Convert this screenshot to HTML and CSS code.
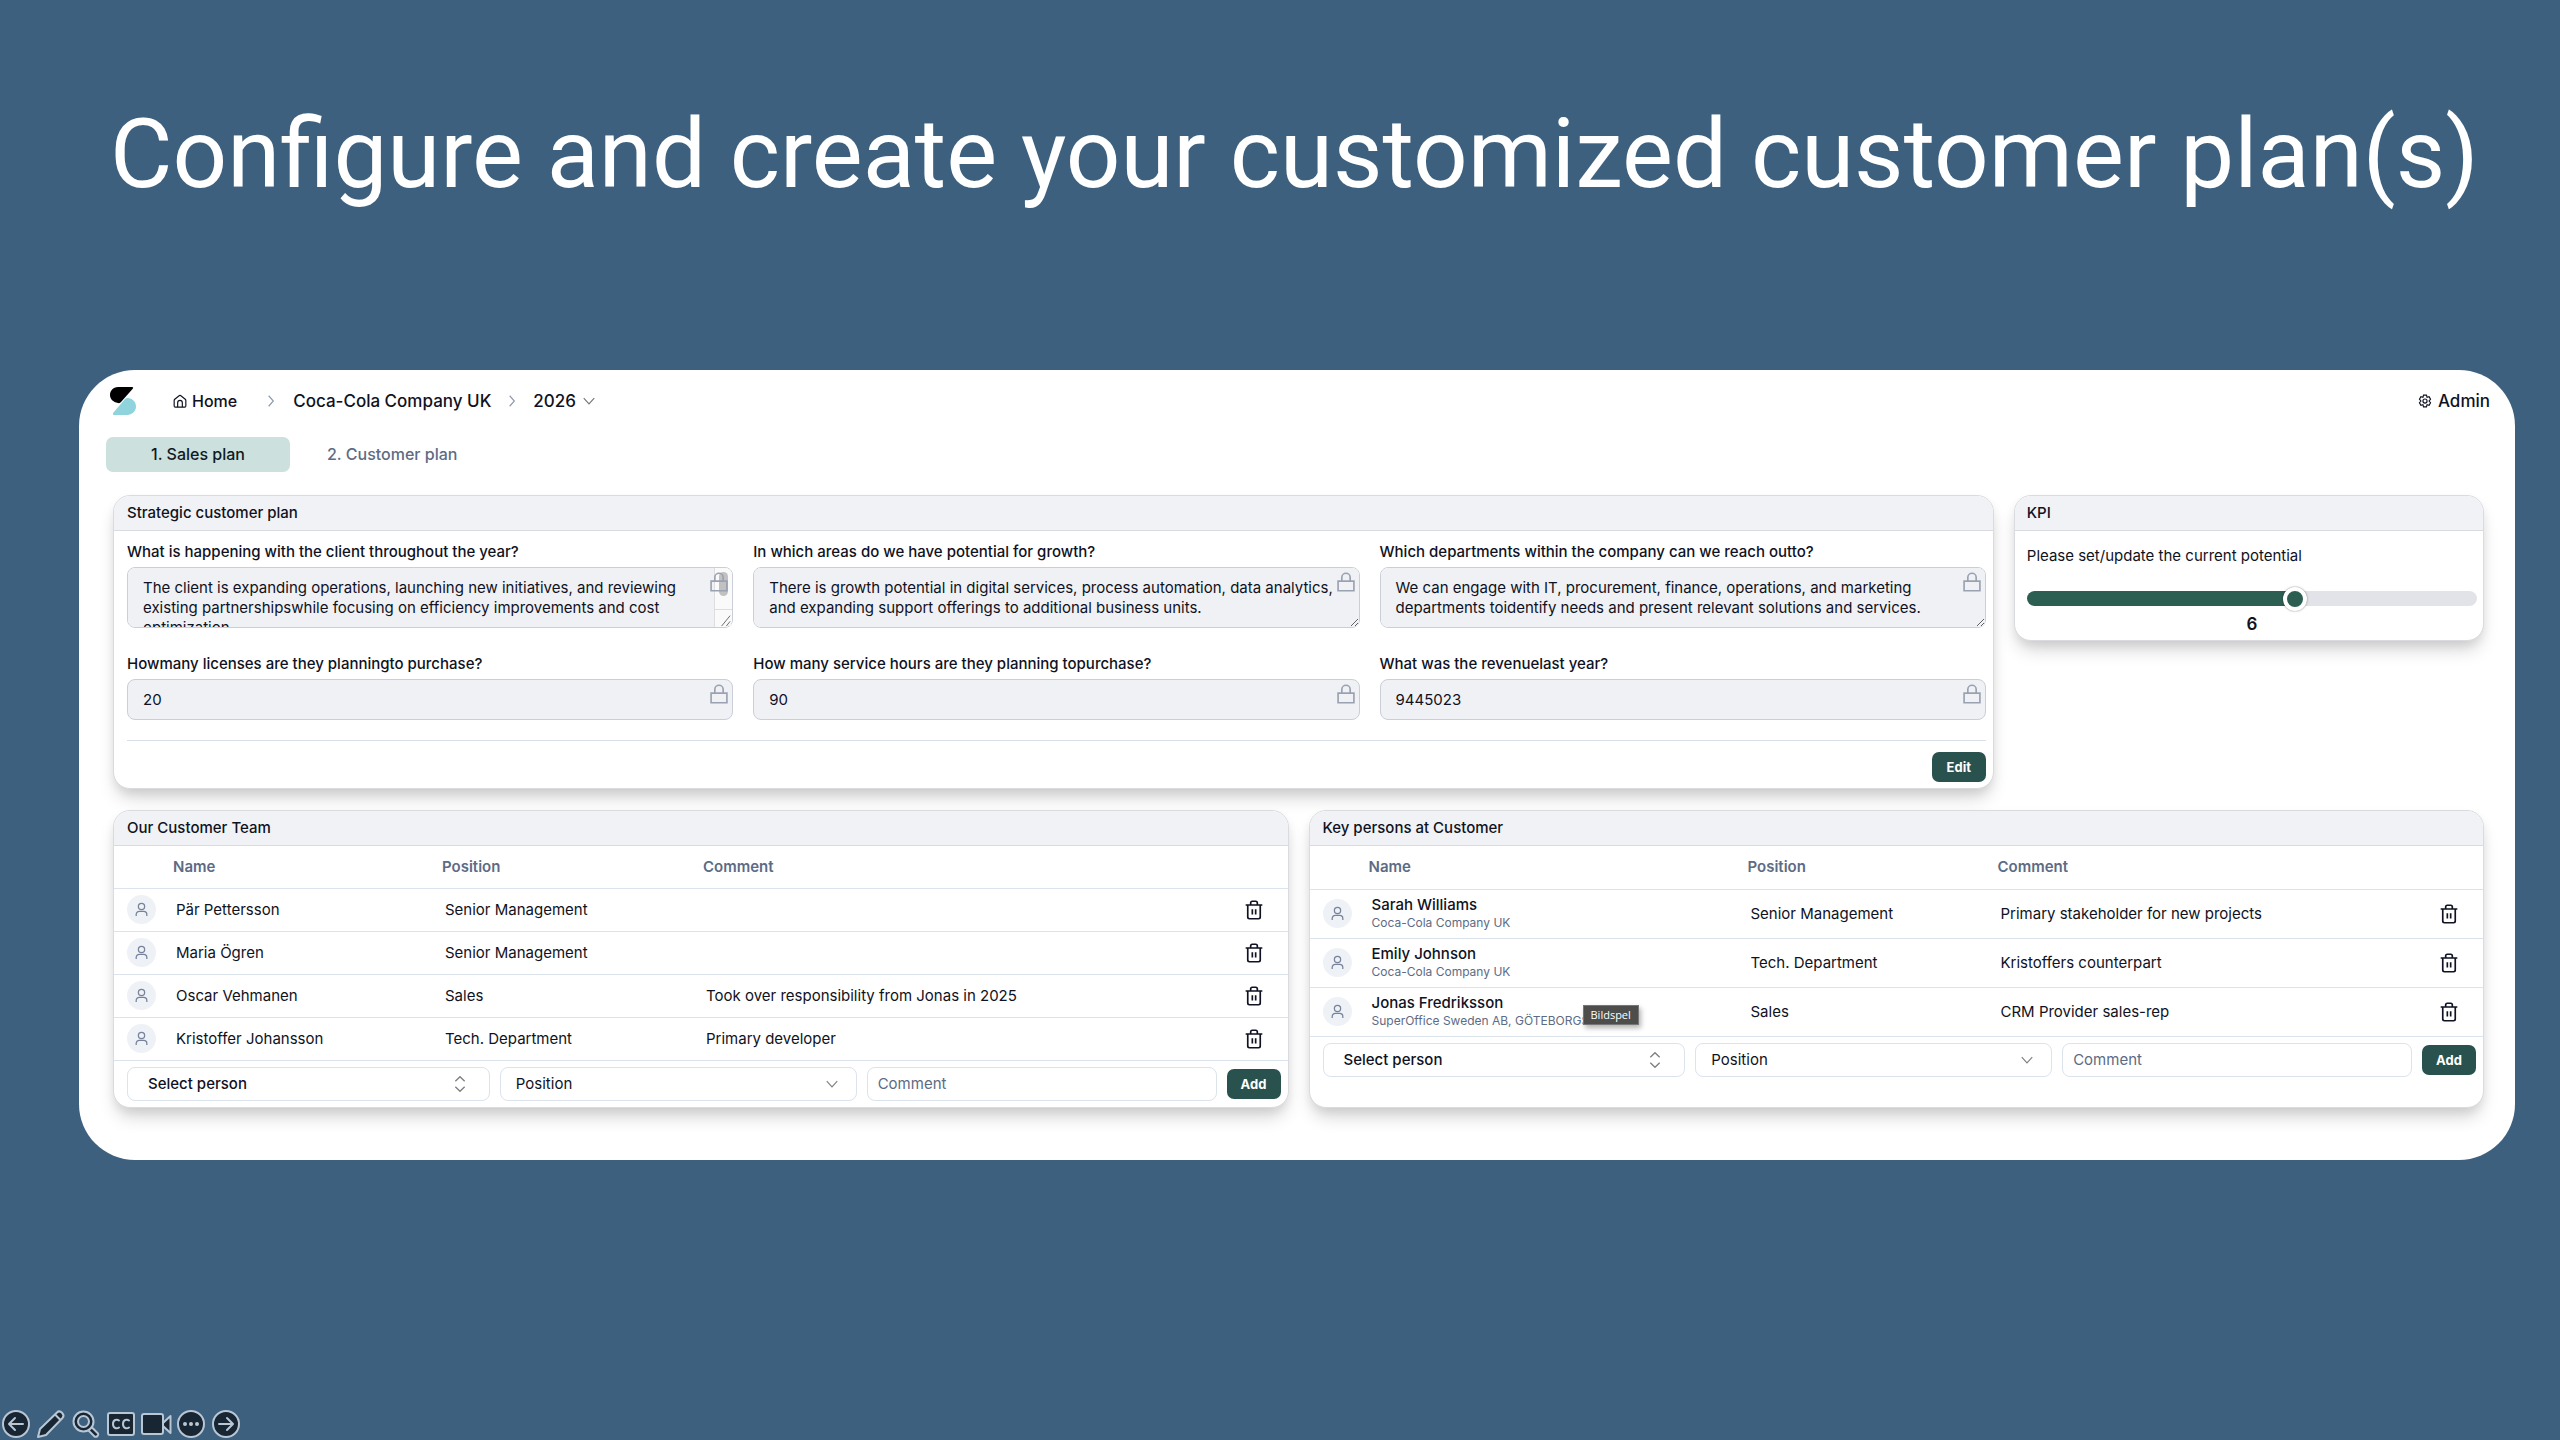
FILE: index.html
```html
<!doctype html>
<html lang="en">
<head>
    <meta charset="utf-8">
    <title>Customer plan</title>
    <meta name="viewport" content="width=device-width, initial-scale=1">
    <link rel="stylesheet" href="styles.css">
</head>
<body>
<svg class="sprite" aria-hidden="true">
    <symbol id="i-lock" viewBox="0 0 24 24">
        <path d="M2.5 11h19v11.5h-19zM7 11V6.5a5 5 0 0 1 10 0V11"></path>
    </symbol>
    <symbol id="i-user" viewBox="0 0 24 24">
        <circle cx="12" cy="7" r="5"></circle>
        <path d="M3.500 22.500v-2.500a5 5 0 0 1 5-5h7a5 5 0 0 1 5 5v2.500"></path>
    </symbol>
    <symbol id="i-trash" viewBox="0 0 24 24">
        <path d="M2 6h20M19.500 6v14.500a2 2 0 0 1-2 2h-11a2 2 0 0 1-2-2V6M8 6V3.500a2 2 0 0 1 2-2h4a2 2 0 0 1 2 2V6M10 11v6.500M14 11v6.500"></path>
    </symbol>
    <symbol id="i-right" viewBox="0 0 24 24"><path d="M8 3l8 9-8 9"></path></symbol>
    <symbol id="i-down" viewBox="0 0 24 24"><path d="M3 7l9 10 9-10"></path></symbol>
    <symbol id="i-updown" viewBox="0 0 24 24"><path d="M5 8l7-7 7 7M5 16l7 7 7-7"></path></symbol>
</svg>

<h1 class="title">Configure and create your customized customer plan(s)</h1>

<main class="panel">
    <header class="topbar">
        <svg class="logo" viewBox="0 0 26 28" aria-label="Logo">
            <path d="M8 0h14q2 0 .500 2L11 15q-1 1.500-3 1C3 15 0 12 0 8S3 0 8 0z" fill="#000"></path>
            <path d="M4 28q-2-.500-.500-2.500L15 12q1.500-1.500 3.500-1C23 12 26 15 26 19.500S22 28 17 28z" fill="#8fd3dc"></path>
        </svg>
        <nav class="crumbs">
            <a href="#" class="home">
                <svg class="icon" viewBox="0 0 24 24"><path d="M2 11q0-1 1-2l8-6.500q1-.500 2 0L21 9q1 1 1 2v9.500q0 2-2 2H4q-2 0-2-2zM8 22v-7a4 4 0 0 1 8 0v7"></path></svg>
                Home
            </a>
            <svg class="icon sep"><use href="#i-right"></use></svg>
            <a href="#">Coca-Cola Company UK</a>
            <svg class="icon sep sep-tight"><use href="#i-right"></use></svg>
            <button type="button" class="year">2026 <svg class="icon"><use href="#i-down"></use></svg></button>
        </nav>
        <a href="#" class="admin">
            <svg class="icon" viewBox="0 0 24 24">
                <path d="M9.500 2h5l1 3.500 3.500-1 2.500 4.500-2.500 3 2.500 3-2.500 4.500-3.500-1-1 3.500h-5l-1-3.500-3.500 1L2.500 15 5 12 2.500 9 5 4.500l3.500 1z"></path>
                <circle cx="12" cy="12" r="3.500"></circle>
            </svg>
            Admin
        </a>
    </header>

    <nav class="tabs">
        <a href="#" class="tab active">1. Sales plan</a>
        <a href="#" class="tab">2. Customer plan</a>
    </nav>

    <div class="row row-plan">
        <section class="card">
            <h2>Strategic customer plan</h2>
            <form class="plan">
                <div class="fields">
                    <div class="field">
                        <label for="q1">What is happening with the client throughout the year?</label>
                        <div class="control">
                            <textarea id="q1" readonly>The client is expanding operations, launching new initiatives, and reviewing existing partnershipswhile focusing on efficiency improvements and cost optimization.</textarea>
                            <span class="scrollbar">
                                <span class="thumb"></span>
                                <svg class="grip" viewBox="0 0 18 18"><path d="M7 17l9-11M12 17l4-5"></path></svg>
                            </span>
                            <svg class="lock"><use href="#i-lock"></use></svg>
                        </div>
                    </div>
                    <div class="field">
                        <label for="q2">In which areas do we have potential for growth?</label>
                        <div class="control">
                            <textarea id="q2" readonly>There is growth potential in digital services, process automation, data analytics, and expanding support offerings to additional business units.</textarea>
                            <svg class="lock"><use href="#i-lock"></use></svg>
                        </div>
                    </div>
                    <div class="field">
                        <label for="q3">Which departments within the company can we reach outto?</label>
                        <div class="control">
                            <textarea id="q3" readonly>We can engage with IT, procurement, finance, operations, and marketing departments toidentify needs and present relevant solutions and services.</textarea>
                            <svg class="lock"><use href="#i-lock"></use></svg>
                        </div>
                    </div>
                    <div class="field">
                        <label for="q4">Howmany licenses are they planningto purchase?</label>
                        <div class="control">
                            <input id="q4" type="text" value="20" readonly>
                            <svg class="lock"><use href="#i-lock"></use></svg>
                        </div>
                    </div>
                    <div class="field">
                        <label for="q5">How many service hours are they planning topurchase?</label>
                        <div class="control">
                            <input id="q5" type="text" value="90" readonly>
                            <svg class="lock"><use href="#i-lock"></use></svg>
                        </div>
                    </div>
                    <div class="field">
                        <label for="q6">What was the revenuelast year?</label>
                        <div class="control">
                            <input id="q6" type="text" value="9445023" readonly>
                            <svg class="lock"><use href="#i-lock"></use></svg>
                        </div>
                    </div>
                </div>
                <div class="actions">
                    <button type="button" class="btn">Edit</button>
                </div>
            </form>
        </section>

        <section class="card kpi">
            <h2>KPI</h2>
            <div class="kpi-body">
                <label for="potential">Please set/update the current potential</label>
                <input id="potential" type="range" min="0" max="10" value="6">
                <output for="potential">6</output>
            </div>
        </section>
    </div>

    <div class="row row-people">
        <section class="card">
            <h2>Our Customer Team</h2>
            <table class="people team">
                <thead>
                <tr>
                    <th class="c-avatar"></th>
                    <th class="c-name">Name</th>
                    <th class="c-position">Position</th>
                    <th>Comment</th>
                    <th class="c-trash"></th>
                </tr>
                </thead>
                <tbody>
                <tr>
                    <td><span class="avatar"><svg><use href="#i-user"></use></svg></span></td>
                    <td>Pär Pettersson</td>
                    <td>Senior Management</td>
                    <td></td>
                    <td><button type="button" class="trash" aria-label="Remove"><svg><use href="#i-trash"></use></svg></button></td>
                </tr>
                <tr>
                    <td><span class="avatar"><svg><use href="#i-user"></use></svg></span></td>
                    <td>Maria Ögren</td>
                    <td>Senior Management</td>
                    <td></td>
                    <td><button type="button" class="trash" aria-label="Remove"><svg><use href="#i-trash"></use></svg></button></td>
                </tr>
                <tr>
                    <td><span class="avatar"><svg><use href="#i-user"></use></svg></span></td>
                    <td>Oscar Vehmanen</td>
                    <td>Sales</td>
                    <td>Took over responsibility from Jonas in 2025</td>
                    <td><button type="button" class="trash" aria-label="Remove"><svg><use href="#i-trash"></use></svg></button></td>
                </tr>
                <tr>
                    <td><span class="avatar"><svg><use href="#i-user"></use></svg></span></td>
                    <td>Kristoffer Johansson</td>
                    <td>Tech. Department</td>
                    <td>Primary developer</td>
                    <td><button type="button" class="trash" aria-label="Remove"><svg><use href="#i-trash"></use></svg></button></td>
                </tr>
                </tbody>
            </table>
            <form class="add">
                <div class="pick pick-person">
                    <select aria-label="Person"><option>Select person</option></select>
                    <svg class="icon"><use href="#i-updown"></use></svg>
                </div>
                <div class="pick">
                    <select aria-label="Position"><option>Position</option></select>
                    <svg class="icon"><use href="#i-down"></use></svg>
                </div>
                <input type="text" placeholder="Comment" aria-label="Comment">
                <button type="button" class="btn">Add</button>
            </form>
        </section>

        <section class="card">
            <h2>Key persons at Customer</h2>
            <table class="people keys">
                <thead>
                <tr>
                    <th class="c-avatar"></th>
                    <th class="c-name">Name</th>
                    <th class="c-position">Position</th>
                    <th>Comment</th>
                    <th class="c-trash"></th>
                </tr>
                </thead>
                <tbody>
                <tr>
                    <td><span class="avatar"><svg><use href="#i-user"></use></svg></span></td>
                    <td><strong>Sarah Williams</strong><small>Coca-Cola Company UK</small></td>
                    <td>Senior Management</td>
                    <td>Primary stakeholder for new projects</td>
                    <td><button type="button" class="trash" aria-label="Remove"><svg><use href="#i-trash"></use></svg></button></td>
                </tr>
                <tr>
                    <td><span class="avatar"><svg><use href="#i-user"></use></svg></span></td>
                    <td><strong>Emily Johnson</strong><small>Coca-Cola Company UK</small></td>
                    <td>Tech. Department</td>
                    <td>Kristoffers counterpart</td>
                    <td><button type="button" class="trash" aria-label="Remove"><svg><use href="#i-trash"></use></svg></button></td>
                </tr>
                <tr>
                    <td><span class="avatar"><svg><use href="#i-user"></use></svg></span></td>
                    <td><strong>Jonas Fredriksson</strong><small class="tip-anchor">SuperOffice Sweden AB, GÖTEBORGS<span class="tip" role="tooltip">Bildspel</span></small></td>
                    <td>Sales</td>
                    <td>CRM Provider sales-rep</td>
                    <td><button type="button" class="trash" aria-label="Remove"><svg><use href="#i-trash"></use></svg></button></td>
                </tr>
                </tbody>
            </table>
            <form class="add">
                <div class="pick pick-person">
                    <select aria-label="Person"><option>Select person</option></select>
                    <svg class="icon"><use href="#i-updown"></use></svg>
                </div>
                <div class="pick">
                    <select aria-label="Position"><option>Position</option></select>
                    <svg class="icon"><use href="#i-down"></use></svg>
                </div>
                <input type="text" placeholder="Comment" aria-label="Comment">
                <button type="button" class="btn">Add</button>
            </form>
        </section>
    </div>
</main>

<!-- slide show controls -->
<footer class="controls">
    <button type="button" aria-label="Previous">
        <svg viewBox="0 0 28 28"><circle cx="14" cy="14" r="13"></circle><path d="M21 14H8M13 8l-6 6 6 6"></path></svg>
    </button>
    <button type="button" aria-label="Pen">
        <svg viewBox="0 0 28 28"><path d="M1 27l2-8L20 2.500c3-3 8.500 2 5.500 5.500L9 25zM18 4.500l5.500 5.500"></path></svg>
    </button>
    <button type="button" aria-label="Zoom">
        <svg viewBox="0 0 28 28">
            <path d="M18 15.500l8 8c1 2-1.500 4-3.500 3l-8-8"></path>
            <circle cx="11.500" cy="11.500" r="10"></circle>
            <circle class="glass" cx="11.500" cy="11.500" r="5.500"></circle>
        </svg>
    </button>
    <button type="button" aria-label="Captions">
        <svg viewBox="0 0 28 28"><rect x="1" y="3" width="26" height="22" rx="2"></rect><path d="M12 10.500c-2-1.500-6-1-6 3.500s4 5 6 3.500M22 10.500c-2-1.500-6-1-6 3.500s4 5 6 3.500"></path></svg>
    </button>
    <button type="button" aria-label="Camera">
        <svg viewBox="0 0 28 28"><path d="M21 13l7.500-7v17L21 16"></path><rect x="0" y="4" width="21" height="20" rx="2"></rect></svg>
    </button>
    <button type="button" aria-label="More">
        <svg viewBox="0 0 28 28"><circle cx="14" cy="14" r="13"></circle><path class="dots" d="M8 14h.010M14 14h.010M20 14h.010"></path></svg>
    </button>
    <button type="button" aria-label="Next">
        <svg viewBox="0 0 28 28"><circle cx="14" cy="14" r="13"></circle><path d="M7 14h13M15 8l6 6-6 6"></path></svg>
    </button>
</footer>
</body>
</html>
```
FILE: styles.css
```css
* {
    box-sizing: border-box;
}

body {
    margin: 0;
    min-height: 100vh;
    display: flex;
    flex-direction: column;
    background: #3d607f;
    color: #0f1222;
    font-family: Inter, "Liberation Sans", sans-serif;
    font-size: 15px;
    line-height: 20px;
}

input, textarea, select, button {
    font: inherit;
    color: inherit;
}

button {
    padding: 0;
    border: 0;
    background: none;
    cursor: pointer;
}

a {
    color: inherit;
    text-decoration: none;
}

svg {
    display: block;
    fill: none;
    stroke: currentColor;
    stroke-width: 2;
}

.sprite {
    position: absolute;
    width: 0;
    height: 0;
}

.icon {
    width: 14px;
    height: 14px;
    flex: none;
}

.title {
    margin: 0;
    padding: 98px 0 160px 110px;
    color: #fff;
    font-family: Roboto, "Liberation Sans", sans-serif;
    font-size: 96px;
    font-weight: 400;
    line-height: 112px;
}

.panel {
    margin: 0 45px 0 79px;
    padding: 17px 31px 52px 34px;
    background: #fff;
    border-radius: 56px;
}

/* top bar */
.topbar {
    display: flex;
    align-items: center;
    height: 28px;
    margin: 0 -6px 22px -3px;
    font-size: 17px;
    font-weight: 500;
}

.logo {
    width: 26px;
    height: 28px;
    stroke: none;
}

.crumbs {
    display: flex;
    align-items: center;
    margin-left: 37px;
}

.home, .admin, .year {
    display: flex;
    align-items: center;
    gap: 6px;
}

.home {
    font-size: 16px;
    gap: 5px;
}

.sep {
    margin: 0 15px 0 27px;
    color: #8f9bad;
}

.sep-tight {
    margin: 0 14px;
}

.year .icon {
    color: #777;
}

.admin {
    margin-left: auto;
}

.tabs {
    display: flex;
    margin-left: -7px;
    margin-bottom: 23px;
    gap: 10px;
    font-size: 16px;
    font-weight: 500;
}

.tab {
    padding: 0 27px;
    border-radius: 7px;
    color: #5d6b84;
    line-height: 35px;
}

.tab.active {
    width: 184px;
    text-align: center;
    background: #cce0de;
    color: #0f1a22;
}

/* cards */
.row {
    display: grid;
    gap: 20px;
}

.row-plan {
    grid-template-columns: 4fr 1fr;
    align-items: start;
    margin-bottom: 21px;
}

.row-people {
    grid-template-columns: 1fr 1fr;
}

.card {
    min-width: 0;
    border: 1px solid #d9dbde;
    border-radius: 17px;
    background: #fff;
    box-shadow: 0 12px 18px -4px rgba(0, 0, 0, .18), 0 4px 10px rgba(0, 0, 0, .06);
}

.card h2 {
    margin: 0;
    padding: 0 13px;
    border-bottom: 1px solid #d9dbde;
    border-radius: 16px 16px 0 0;
    background: #f1f2f6;
    font-size: 15px;
    font-weight: 500;
    line-height: 34px;
}

.plan {
    padding: 11px 7px 6px 13px;
}

.fields {
    display: grid;
    grid-template-columns: repeat(3, 1fr);
    gap: 26px 20px;
}

.field label {
    display: block;
    margin-bottom: 5px;
    font-weight: 500;
}

.control {
    position: relative;
}

.control input, .control textarea {
    display: block;
    width: 100%;
    border: 1px solid #c9ced8;
    border-radius: 8px;
    background: #f0f1f5;
    outline: none;
}

.control textarea {
    height: 61px;
    padding: 10px 15px;
    resize: vertical;
}

.control input {
    height: 41px;
    padding: 0 15px;
}

.scrollbar {
    position: absolute;
    top: 1px;
    right: 1px;
    bottom: 1px;
    width: 18px;
    display: flex;
    flex-direction: column;
    justify-content: space-between;
    border-left: 1px solid #dcdde0;
    border-radius: 0 7px 7px 0;
    background: #fafafa;
}

.thumb {
    width: 9px;
    height: 24px;
    margin: 4px 0 0 4px;
    border-radius: 5px;
    background: #c1c1c1;
}

.grip {
    width: 17px;
    height: 18px;
    border-top: 1px solid #dcdde0;
    stroke-width: 1;
    color: #666;
}

.lock {
    position: absolute;
    top: 5px;
    right: 4px;
    width: 20px;
    height: 20px;
    color: #9aa2b1;
    pointer-events: none;
}

.actions {
    display: flex;
    justify-content: flex-end;
    margin-top: 20px;
    padding-top: 11px;
    border-top: 1px solid #d9dfe8;
}

.btn {
    min-width: 54px;
    height: 30px;
    padding: 0 14px;
    border-radius: 7px;
    background: #29524e;
    color: #fff;
    font-size: 13px;
    font-weight: 700;
}

.kpi .kpi-body {
    display: flex;
    flex-direction: column;
    padding: 15px 6px 6px 12px;
}

.kpi h2 {
    padding-left: 12px;
}

.kpi input {
    appearance: none;
    width: 100%;
    height: 24px;
    margin: 20px 0 4px;
    background: none;
}

.kpi input::-webkit-slider-runnable-track {
    height: 15px;
    border-radius: 8px;
    background: linear-gradient(to right, #2d5e52 59%, #e2e3e9 59%);
}

.kpi input::-webkit-slider-thumb {
    appearance: none;
    width: 24px;
    height: 24px;
    margin-top: -4px;
    border: 4px solid #fff;
    border-radius: 50%;
    background: #2d5e52;
    box-shadow: 0 0 2px rgba(0, 0, 0, .5);
}

.kpi output {
    text-align: center;
    font-size: 17px;
    font-weight: 600;
}

/* people tables */
.people {
    width: 100%;
    table-layout: fixed;
    border-collapse: collapse;
}

.people th, .people td {
    padding: 0;
    border-bottom: 1px solid #dbe3ec;
    text-align: left;
}

.people th {
    height: 42px;
    color: #5d6b84;
    font-weight: 600;
}

.keys th {
    height: 43px;
}

.people td {
    padding-left: 3px;
}

.people td:first-child {
    padding-left: 13px;
}

.people td:last-child {
    padding: 0;
}

.team td {
    height: 43px;
}

.keys td {
    height: 49px;
}

.c-avatar {
    width: 59px;
}

.c-trash {
    width: 68px;
}

.team .c-name {
    width: 269px;
}

.team .c-position {
    width: 261px;
}

.keys .c-name {
    width: 379px;
}

.keys .c-position {
    width: 250px;
}

.people strong, .people small {
    display: block;
}

.people strong {
    font-weight: 500;
    line-height: 18px;
}

.people small {
    color: #5d6b84;
    font-size: 12px;
    line-height: 18px;
}

.avatar {
    display: flex;
    align-items: center;
    justify-content: center;
    width: 29px;
    height: 29px;
    border-radius: 50%;
    background: #eef1f6;
    color: #76839a;
}

.avatar svg {
    width: 15px;
    height: 15px;
}

.trash {
    display: block;
    margin: 0 auto;
}

.trash svg {
    width: 20px;
    height: 20px;
}

.people .tip-anchor {
    position: relative;
    width: max-content;
}

.tip {
    position: absolute;
    top: -7px;
    left: 211px;
    padding: 0 7px;
    border: 1px solid #767676;
    background: #4d4d4b;
    box-shadow: 2px 3px 5px rgba(0, 0, 0, .3);
    color: #fff;
    font-family: "Open Sans", sans-serif;
    font-size: 11px;
}

.add {
    display: grid;
    grid-template-columns: 363fr 357fr 350fr auto;
    align-items: center;
    gap: 10px;
    padding: 6px 7px 6px 13px;
}

.add input, .add select {
    display: block;
    width: 100%;
    height: 34px;
    border: 1px solid #dbe3ec;
    border-radius: 8px;
    background: #fff;
    outline: none;
}

.add input {
    padding: 0 10px;
}

.add input::placeholder {
    color: #5d6b84;
}

.pick {
    position: relative;
}

.pick select {
    appearance: none;
    padding: 0 15px;
}

.pick-person select {
    padding: 0 20px;
    font-weight: 500;
}

.pick .icon {
    position: absolute;
    top: 10px;
    right: 18px;
    color: #808080;
    pointer-events: none;
}

.pick-person .icon {
    top: 9px;
    right: 22px;
    height: 16px;
    width: 16px;
}

/* slide show controls */
.controls {
    display: flex;
    gap: 7px;
    margin-top: auto;
    padding: 0 2px 2px;
    color: #b9c6d4;
}

.controls svg {
    width: 28px;
    height: 28px;
    overflow: visible;
    fill: #182633;
}

.controls path {
    stroke-linecap: round;
    stroke-linejoin: round;
}

.controls .glass {
    fill: #3d607f;
}

.controls .dots {
    stroke-width: 4;
}
```
